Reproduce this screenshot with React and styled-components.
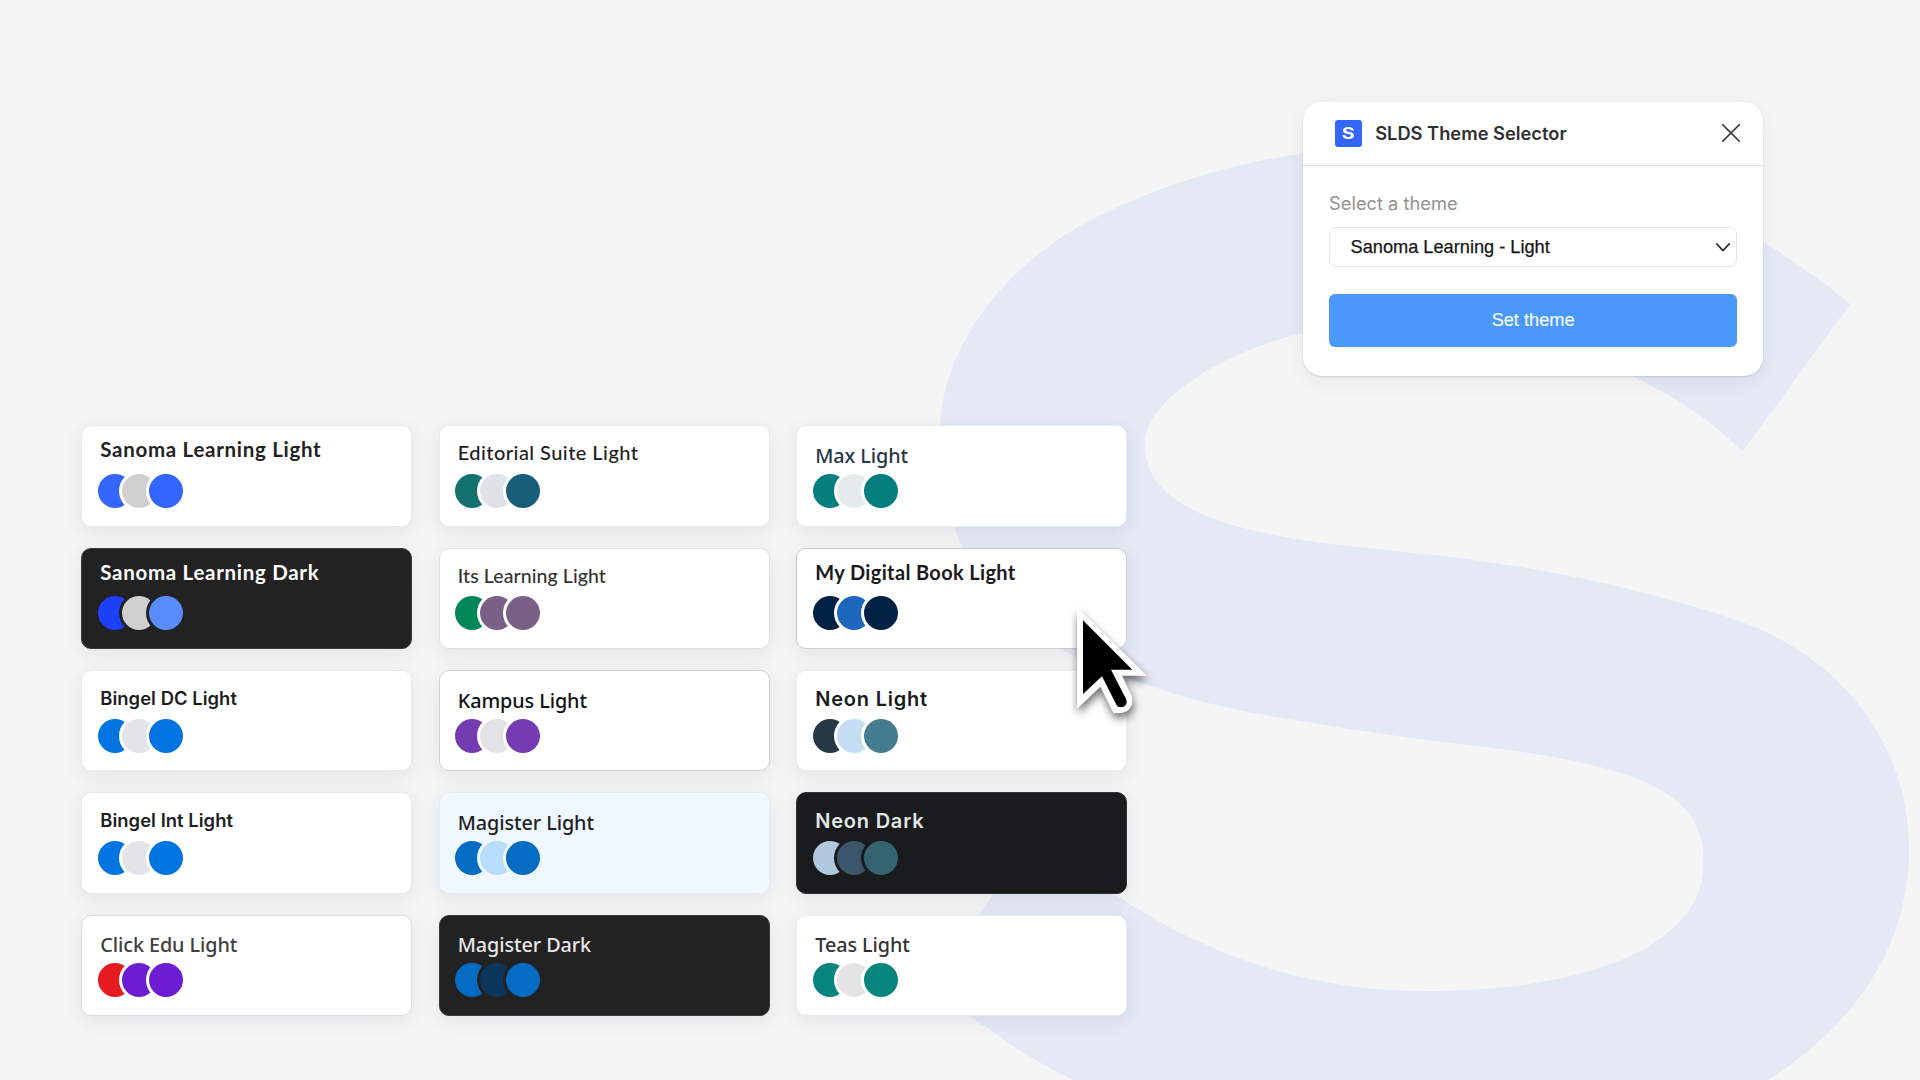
import React from "react";
import styled, { createGlobalStyle } from "styled-components";

const GlobalStyle = createGlobalStyle`
  *, *::before, *::after { box-sizing: border-box; }
  body {
    margin: 0;
    background: #f5f5f5;
    font-family: Inter, "Liberation Sans", sans-serif;
    -webkit-font-smoothing: antialiased;
  }
`;

const families = {
  lato: 'Lato, "Open Sans", sans-serif',
  noto: '"Noto Sans", "Open Sans", sans-serif',
  inter: 'Inter, "Liberation Sans", sans-serif',
};

const Page = styled.main`
  position: relative;
  display: flex;
  align-items: flex-start;
  width: 1920px;
  height: 1080px;
  overflow: hidden;
  background: #f5f5f5;
`;

const Backdrop = styled.svg`
  position: absolute;
  inset: 0;
  width: 1920px;
  height: 1080px;
`;

const ThemeGrid = styled.section`
  position: relative;
  display: grid;
  grid-template-columns: repeat(3, 331px);
  grid-template-rows: repeat(5, 101.4px);
  grid-auto-flow: column;
  gap: 20.95px 26.5px;
  margin: 425.2px 0 0 81.2px;
`;

const Card = styled.article`
  display: flex;
  flex-direction: column;
  justify-content: space-between;
  padding: 0 15.5px 17.7px;
  border: 1px solid ${(p) => p.$border};
  border-radius: 10px;
  background: ${(p) => p.$bg};
  box-shadow: 0 5px 20px rgba(25, 45, 60, 0.085);
`;

const CardTitle = styled.h2`
  margin: ${(p) => p.$top - 1}px 0 0 2.6px;
  color: ${(p) => p.$color};
  font-family: ${(p) => families[p.$family]};
  font-size: ${(p) => p.$size}px;
  font-weight: ${(p) => p.$weight};
  line-height: 24px;
  letter-spacing: ${(p) => p.$tracking}px;
  white-space: nowrap;
`;

const Swatches = styled.div`
  display: flex;
`;

const Swatch = styled.span`
  width: 34px;
  height: 34px;
  border-radius: 50%;
  background: ${(p) => p.$color};
  box-shadow: 0 0 0 3px ${(p) => p.$ring};

  & + & { margin-left: -9.7px; }
  & + & + & { margin-left: -7.5px; }
`;

const Dialog = styled.section`
  position: relative;
  width: 460.6px;
  height: 274px;
  margin: 102px 0 0 175.5px;
  border-radius: 19px;
  background: #fff;
  box-shadow: 0 1px 2px rgba(0, 0, 0, 0.12), 0 6px 22px rgba(20, 30, 50, 0.06);
`;

const DialogHeader = styled.header`
  display: flex;
  align-items: center;
  height: 64px;
  padding: 0 23.4px 2px 32.3px;
  border-bottom: 1.3px solid #e0e0e0;
`;

const Logo = styled.span`
  display: flex;
  align-items: center;
  justify-content: center;
  width: 27px;
  height: 27px;
  margin-top: 2px;
  border-radius: 3px;
  background: #3366ff;
`;

const LogoLetter = styled.span`
  color: #fff;
  font: 700 16px/27px ${families.inter};
  transform: scaleX(1.25);
`;

const DialogTitle = styled.h1`
  flex: 1;
  margin: 0 0 0 13.2px;
  color: #303030;
  font: 600 18.3px/24px ${families.inter};
`;

const CloseButton = styled.button`
  display: flex;
  padding: 0;
  border: 0;
  background: none;
`;

const DialogBody = styled.div`
  display: flex;
  flex-direction: column;
  padding: 24.5px 26.2px 0 26.4px;
`;

const FieldLabel = styled.label`
  color: #929292;
  font: 400 18.3px/24px ${families.inter};
`;

const SelectBox = styled.div`
  display: flex;
  align-items: center;
  justify-content: space-between;
  height: 40px;
  margin-top: 12.5px;
  padding: 0 6px 0 20.5px;
  border: 1.3px solid #e4e4e4;
  border-radius: 7px;
  color: #161616;
  font: 400 18.2px/22px "Liberation Sans", Arial, sans-serif;
  -webkit-text-stroke: 0.25px #161616;
`;

const SubmitButton = styled.button`
  height: 53px;
  margin-top: 26.6px;
  padding: 0;
  border: 0;
  border-radius: 6px;
  background: #4a98fb;
  color: #f2f8ff;
  font: 400 18.2px/22px "Liberation Sans", Arial, sans-serif;
  -webkit-text-stroke: 0.2px #f2f8ff;
`;

const Pointer = styled.svg`
  position: absolute;
  left: 1060px;
  top: 590px;
  width: 110px;
  height: 140px;
  filter: drop-shadow(1px 5px 4px rgba(0, 0, 0, 0.55));
`;

const sanoma = { family: "lato", size: 20.5, weight: 700, tracking: 0.7, top: 12 };
const bingel = { family: "inter", size: 18.4, weight: 600, tracking: 0.05, top: 16.3 };
const noto = { family: "noto", size: 19.8, weight: 500, tracking: -0.08, top: 18.8 };
const neon = { family: "inter", size: 20, weight: 600, tracking: 0.78, top: 17.2 };

const themes = [
  { name: "Sanoma Learning Light", type: sanoma, color: "#222", bg: "#fff", border: "#e9e9e9", swatches: ["#3366ff", "#d0d0d0", "#3366ff"] },
  { name: "Sanoma Learning Dark", type: sanoma, color: "#fff", bg: "#222222", border: "#3a3a3a", swatches: ["#1c40f8", "#d0d0d0", "#598cff"] },
  { name: "Bingel DC Light", type: bingel, color: "#1d1d1f", bg: "#fff", border: "#e8e9eb", swatches: ["#0074e0", "#e1e5ea", "#0074e0"] },
  { name: "Bingel Int Light", type: bingel, color: "#1d1d1f", bg: "#fff", border: "#e8e9eb", swatches: ["#0074e0", "#e1e5ea", "#0074e0"] },
  { name: "Click Edu Light", type: noto, color: "#404040", bg: "#fff", border: "#dcdcdc", swatches: ["#e51b22", "#6d1dd1", "#6d1dd1"] },
  { name: "Editorial Suite Light", type: { family: "lato", size: 20, weight: 500, tracking: 0.45, top: 15.3 }, color: "#1d1d1f", bg: "#fff", border: "#ebebee", swatches: ["#14716f", "#e1e2e8", "#185d79"] },
  { name: "Its Learning Light", type: { family: "lato", size: 19.5, weight: 500, tracking: 0.08, top: 16.8 }, color: "#333", bg: "#fff", border: "#e2e2e2", swatches: ["#008757", "#7a6087", "#7a6087"] },
  { name: "Kampus Light", type: noto, color: "#111", bg: "#fff", border: "#d2d4d4", swatches: ["#743bb3", "#e3e3e6", "#743bb3"] },
  { name: "Magister Light", type: noto, color: "#222", bg: "#eff7ff", border: "#e5ecf2", swatches: ["#046dc3", "#b7deff", "#046dc3"] },
  { name: "Magister Dark", type: noto, color: "#e6e6e6", bg: "#222222", border: "#3a3a3a", swatches: ["#046dc3", "#0b375d", "#046dc3"] },
  { name: "Max Light", type: noto, color: "#253746", bg: "#fff", border: "#e6edec", swatches: ["#057e80", "#e5ebeb", "#057e80"] },
  { name: "My Digital Book Light", type: { family: "lato", size: 20, weight: 700, tracking: 0.35, top: 12 }, color: "#1a1a1a", bg: "#fff", border: "#cccccc", swatches: ["#002144", "#1d68bd", "#002144"] },
  { name: "Neon Light", type: neon, color: "#191b1d", bg: "#fff", border: "#ebebeb", swatches: ["#263747", "#c5ddf2", "#447d90"] },
  { name: "Neon Dark", type: neon, color: "#e4e6e7", bg: "#191b1d", border: "#2f3438", swatches: ["#b1c9de", "#3b556c", "#33646f"] },
  { name: "Teas Light", type: noto, color: "#333", bg: "#fff", border: "#ebebeb", swatches: ["#06847e", "#e5e5e5", "#06847e"] },
];

function ThemeCard({ theme }) {
  const { type } = theme;
  return (
    <Card $bg={theme.bg} $border={theme.border}>
      <CardTitle
        $color={theme.color}
        $family={type.family}
        $size={type.size}
        $weight={type.weight}
        $tracking={type.tracking}
        $top={type.top}
      >
        {theme.name}
      </CardTitle>
      <Swatches>
        {theme.swatches.map((color, i) => (
          <Swatch key={i} $color={color} $ring={theme.bg} />
        ))}
      </Swatches>
    </Card>
  );
}

export default function App() {
  return (
    <Page>
      <GlobalStyle />
      <Backdrop viewBox="0 0 1920 1080" aria-hidden="true">
        <path
          fill="#e5e9f6"
          d="M1850 304 L1742.4 451.8 C1712 420 1678 399 1640 380 C1565 340 1480 323 1400 323 C1365 323 1333 327 1303 333
             C1225 351 1147 398 1144.5 443 C1146 495 1191 527 1339 545 C1385 550 1431 554 1477 560.4
             C1560 571.5 1655 592 1742 622 C1850 662 1909 752 1909 849 C1909 940 1862 1020 1768 1080
             L1768 1120 L1130 1120 L1073 1080 C1045 1066 1019 1052 998 1035 C972 1018 950 1002 931 982
             L1031 841 C1056 861 1088 878 1120 898 C1215 960 1315 991 1426 991
             C1590 991 1703.7 945 1703.7 863 C1703.7 790 1640 764 1451.6 743
             C1437 741 1424 740 1411 738 C1370 732 1329 726 1288 719 C1238 711 1193 701 1148 685
             C1115 675 1087 664 1061 649 C1018 624 980 590 962 547 C950 520 939 475 940 425
             C945 340 1010 258 1105 213 C1165 184 1230 164 1303 153.5 C1500 138 1640 165 1763 242 C1793 260 1821 280 1850 304 Z"
        />
      </Backdrop>

      <ThemeGrid>
        {themes.map((theme) => (
          <ThemeCard key={theme.name} theme={theme} />
        ))}
      </ThemeGrid>

      <Dialog>
        <DialogHeader>
          <Logo>
            <LogoLetter>S</LogoLetter>
          </Logo>
          <DialogTitle>SLDS Theme Selector</DialogTitle>
          <CloseButton aria-label="Close">
            <svg width="18" height="18" viewBox="0 0 18 18">
              <path d="M0.6 0.6 17.4 17.4M17.4 0.6 0.6 17.4" stroke="#3a3a3a" strokeWidth="1.5" strokeLinecap="round" />
            </svg>
          </CloseButton>
        </DialogHeader>
        <DialogBody>
          <FieldLabel>Select a theme</FieldLabel>
          <SelectBox>
            Sanoma Learning - Light
            <svg width="14" height="9" viewBox="0 0 14 9">
              <path d="M0.8 0.9 7 7.6 13.2 0.9" fill="none" stroke="#2a2a2a" strokeWidth="1.6" strokeLinecap="round" strokeLinejoin="round" />
            </svg>
          </SelectBox>
          <SubmitButton>Set theme</SubmitButton>
        </DialogBody>
      </Dialog>

      <Pointer viewBox="0 0 330 420" aria-hidden="true">
        <path
          fill="#fff"
          d="M51 52 L261 257 H186 L214 316 C224 344 208 367 184 369 H160 L121 290 L51 357 Z"
        />
        <path
          fill="#000"
          d="M69 91 L217 239 H153 L197 325 C206 343 193 352 183 352 C174 352 171 348 168 342 L126 259 L69 312 Z"
        />
      </Pointer>
    </Page>
  );
}
